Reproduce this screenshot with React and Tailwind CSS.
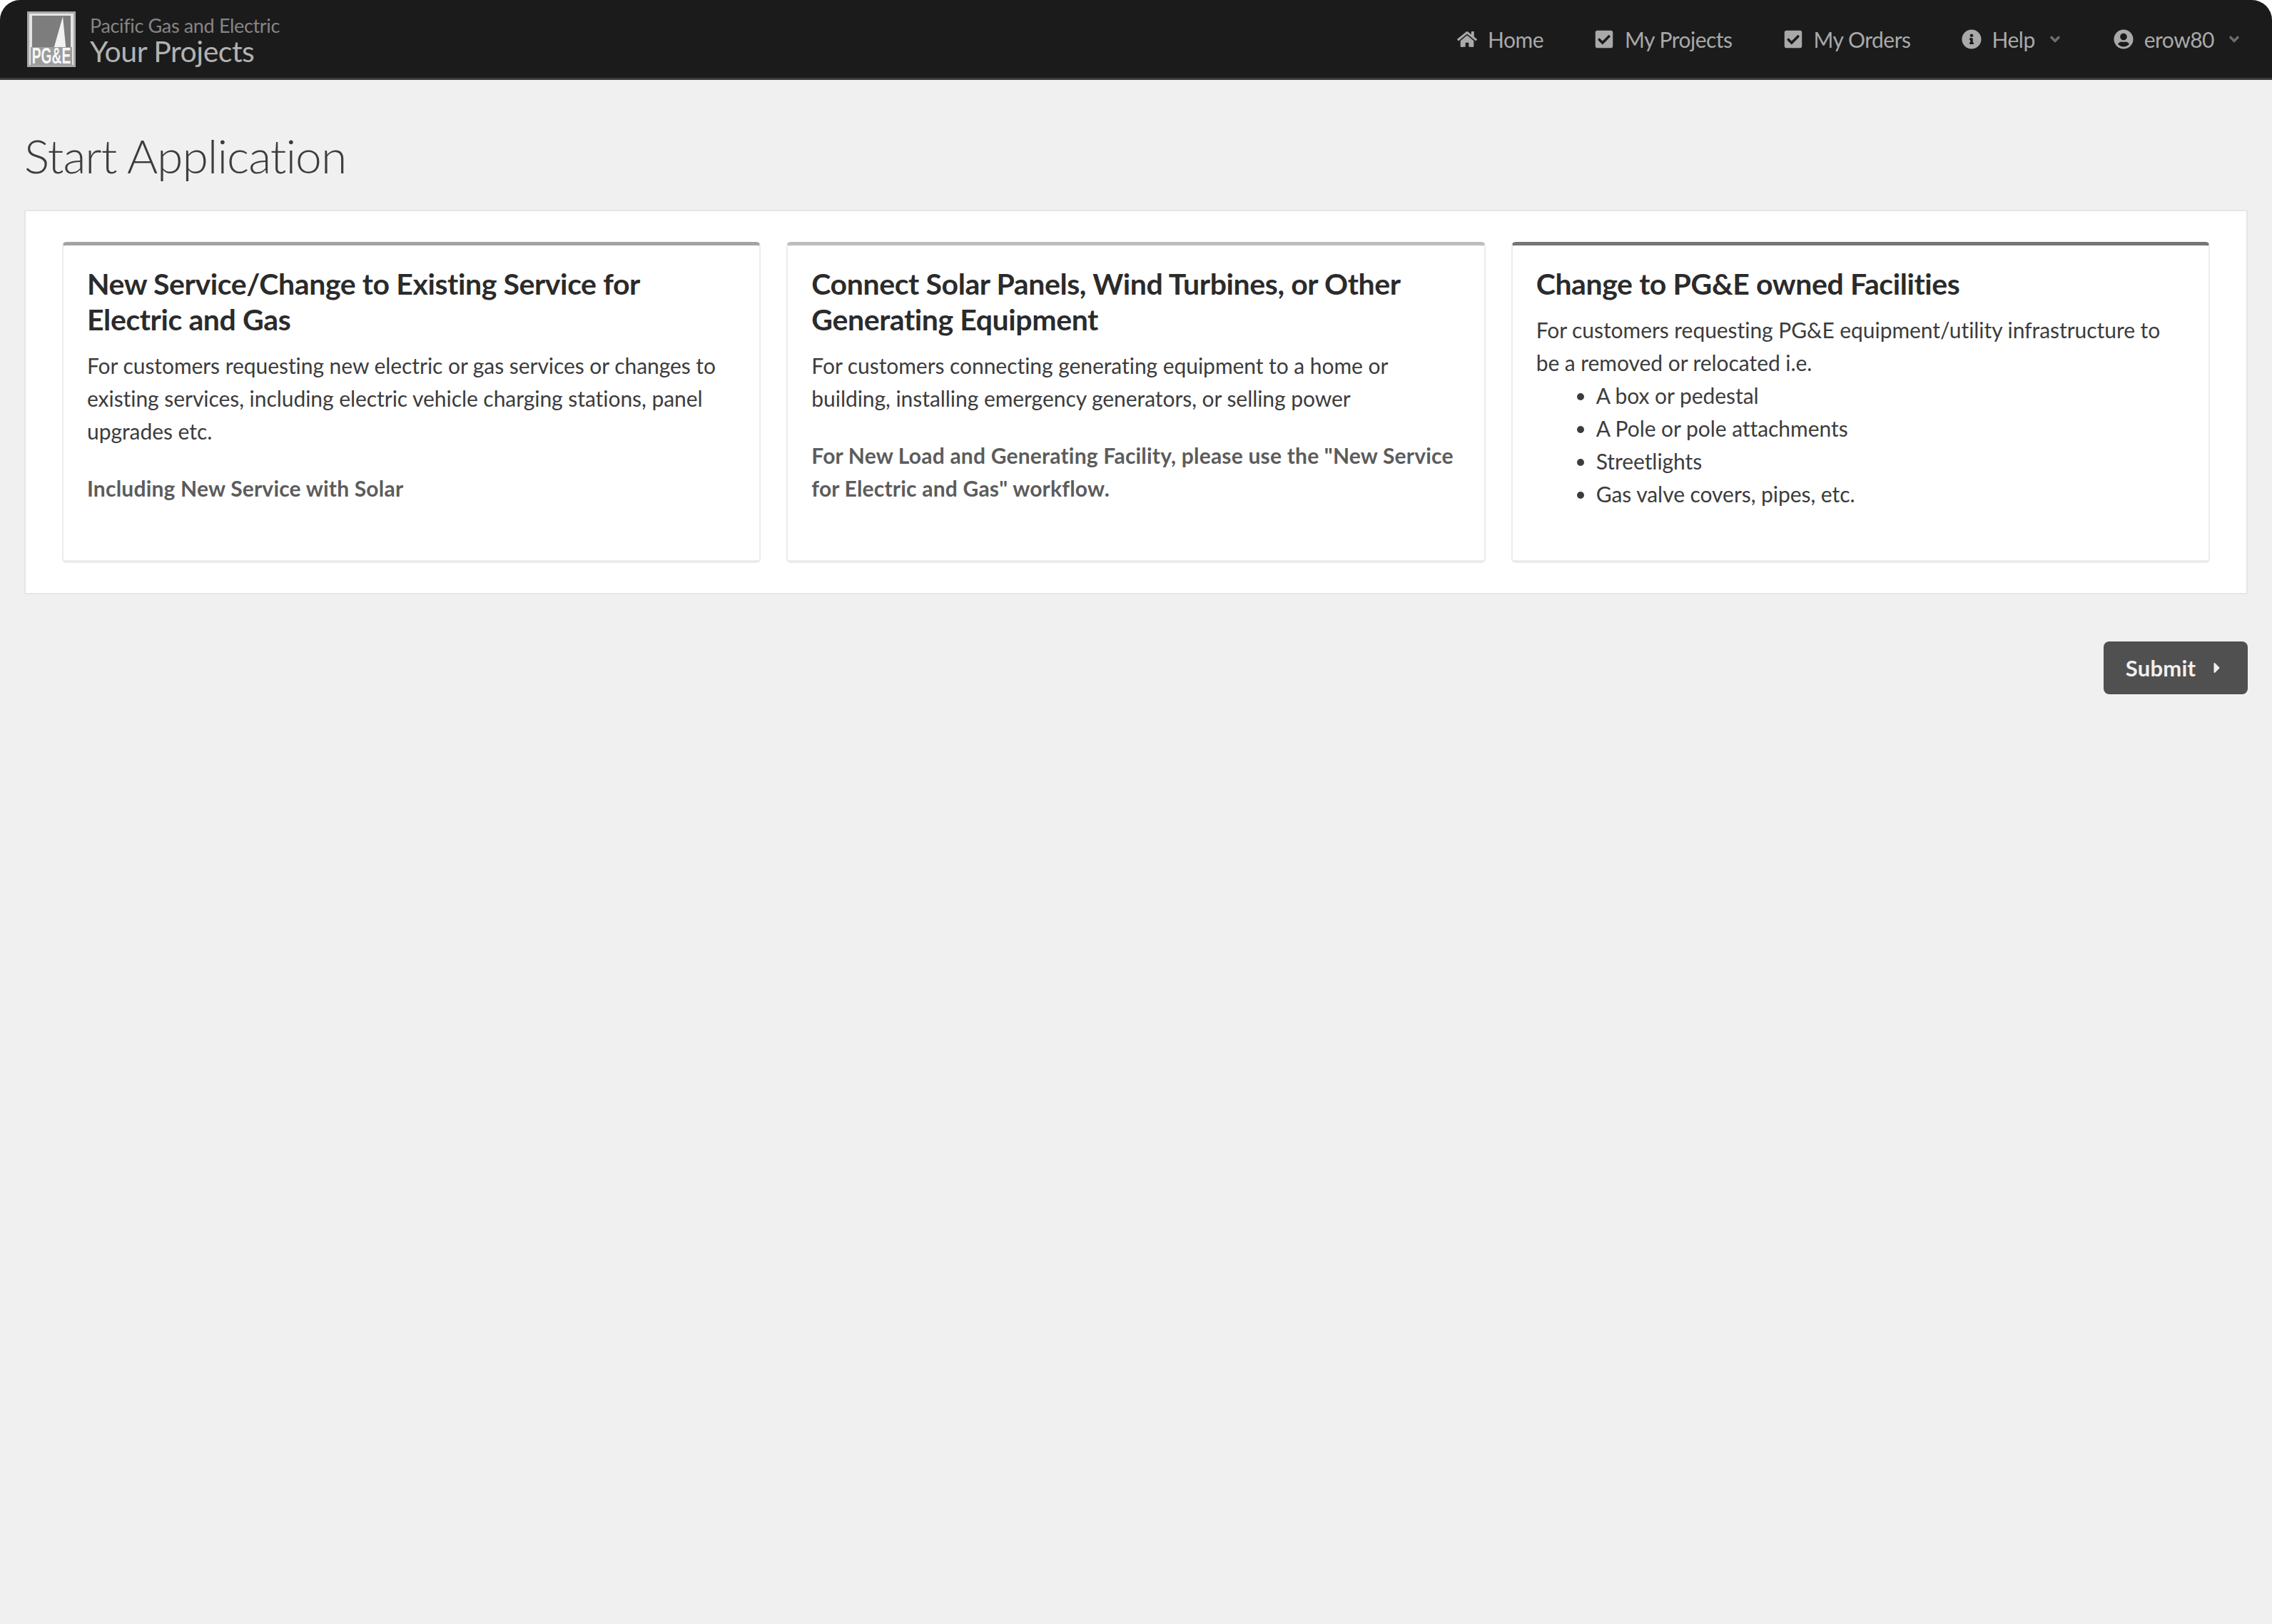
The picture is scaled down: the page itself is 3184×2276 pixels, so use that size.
import { FaHome, FaCheckSquare, FaInfoCircle, FaUserCircle, FaCaretRight, FaAngleDown } from 'react-icons/fa'

const font = { fontFamily: '"Lato", "Noto Sans", sans-serif' }

function Logo() {
  return (
    <svg width="68" height="78" viewBox="0 0 68 78" className="shrink-0 overflow-visible">
      <rect x="0" y="0" width="68" height="78" fill="#a8a8a8" />
      <rect x="3" y="3" width="62" height="72" fill="#e4e4e4" />
      <rect x="7" y="6" width="54" height="44" fill="#7d7d7d" />
      <path d="M50 7 L54 48 L54 56 L36 56 L39 46 Z" fill="#f2f2f2" />
      <rect x="5" y="50" width="58" height="25" fill="#9c9c9c" />
      <text x="0" y="73" transform="translate(34 0) scale(0.6 1)" textAnchor="middle" fontSize="32" fontWeight="700" fill="#f7f7f7" fontFamily="Liberation Sans">PG&amp;E</text>
    </svg>
  )
}

function NavItem({ icon: Icon, label, caret }) {
  return (
    <div className="flex items-center text-[#a9a9a9] text-[30px] tracking-[-0.5px]">
      <Icon className="w-[28px] h-[28px] mr-[15px]" />
      <span className="leading-none">{label}</span>
      {caret && <FaAngleDown className="w-[22px] h-[22px] ml-[17px] text-[#6e6e6e]" />}
    </div>
  )
}

function Card({ title, children, topColor }) {
  return (
    <div className={`flex-1 h-[450px] bg-white rounded-[6px] border-x-2 border-b-4 border-[#ececec] border-t-[5px] ${topColor} px-[33px] pt-[29px]`}>
      <h3 className="text-[41px] leading-[50px] font-bold text-[#2b2b2b] tracking-[-0.4px] pr-[30px]">{title}</h3>
      <div className="mt-[16px] text-[30px] leading-[46px] text-[#3c3c3c] tracking-[-0.05px]">{children}</div>
    </div>
  )
}

export default function App() {
  return (
    <div className="w-full min-h-screen bg-[#f0f0f0]" style={font}>
      <div className="bg-white">
        <header className="h-[112px] bg-[#1b1b1b] border-b-[3px] border-[#3a3a3a] rounded-t-[28px] flex items-center pl-[38px] pr-[42px]">
          <Logo />
          <div className="ml-[20px] pt-[4px] flex flex-col">
            <span className="text-[27px] leading-[30px] text-[#858585] tracking-[-0.35px]">Pacific Gas and Electric</span>
            <span className="text-[41px] leading-[42px] text-[#b2b2b2] tracking-[-0.5px]">Your Projects</span>
          </div>
          <nav className="ml-auto flex items-center gap-[71px]">
            <NavItem icon={FaHome} label="Home" />
            <NavItem icon={FaCheckSquare} label="My Projects" />
            <NavItem icon={FaCheckSquare} label="My Orders" />
            <NavItem icon={FaInfoCircle} label="Help" caret />
            <NavItem icon={FaUserCircle} label="erow80" caret />
          </nav>
        </header>
      </div>

      <main className="px-[34px]">
        <h1 className="pt-[64px] text-[66px] leading-[84px] font-light text-[#3d3d3d] tracking-[-1px]">Start Application</h1>

        <section className="mt-[34px] h-[539px] bg-white border-2 border-[#e6e6e6] pt-[43px] px-[51px] flex gap-[36px]">
          <Card title="New Service/Change to Existing Service for Electric and Gas" topColor="border-t-[#a3a3a3]">
            <p>For customers requesting new electric or gas services or changes to existing services, including electric vehicle charging stations, panel upgrades etc.</p>
            <p className="mt-[34px] font-bold text-[#5c5c5c] tracking-[0.2px]">Including New Service with Solar</p>
          </Card>
          <Card title="Connect Solar Panels, Wind Turbines, or Other Generating Equipment" topColor="border-t-[#bdbdbd]">
            <p>For customers connecting generating equipment to a home or building, installing emergency generators, or selling power</p>
            <p className="mt-[34px] font-bold text-[#5c5c5c] tracking-[0.2px]">For New Load and Generating Facility, please use the "New Service for Electric and Gas" workflow.</p>
          </Card>
          <Card title="Change to PG&E owned Facilities" topColor="border-t-[#757575]">
            <p>For customers requesting PG&amp;E equipment/utility infrastructure to be a removed or relocated i.e.</p>
            <ul className="list-disc pl-[84px]">
              <li>A box or pedestal</li>
              <li>A Pole or pole attachments</li>
              <li>Streetlights</li>
              <li>Gas valve covers, pipes, etc.</li>
            </ul>
          </Card>
        </section>

        <div className="mt-[66px] flex justify-end">
          <button className="w-[202px] h-[74px] rounded-[8px] bg-[#505050] text-[#f0f0f0] text-[31px] font-bold tracking-[0.2px] flex items-center justify-center">
            Submit
            <FaCaretRight className="w-[24px] h-[24px] ml-[18px]" />
          </button>
        </div>
      </main>
    </div>
  )
}
